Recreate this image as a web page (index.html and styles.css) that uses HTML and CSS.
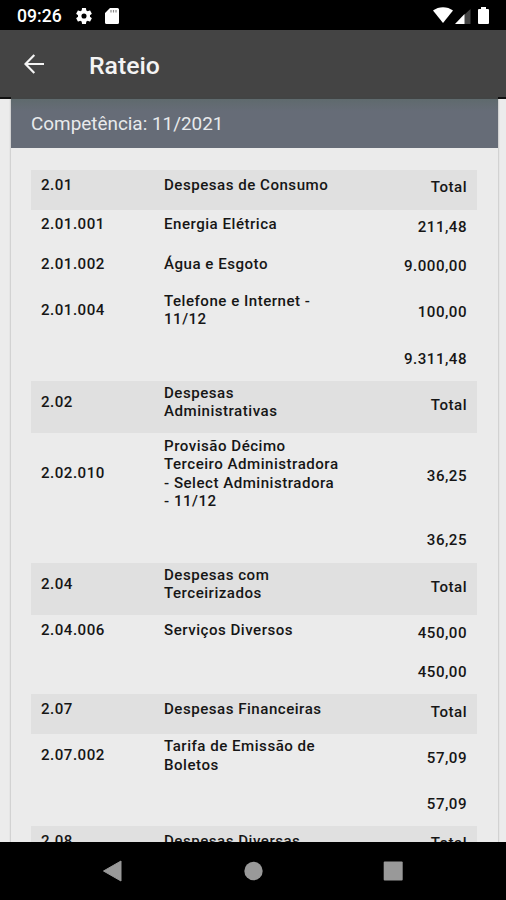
FILE: index.html
```html
<!DOCTYPE html>
<html lang="pt-BR">
<head>
<meta charset="utf-8">
<title>Rateio</title>
<link rel="stylesheet" href="styles.css">
</head>
<body>
<div class="status">
  <span class="clock">09:26</span>
  <svg class="gear" viewBox="2 2 20 20"><path fill="#fff" fill-rule="evenodd" d="M19.43 12.98c.04-.32.07-.64.07-.98s-.03-.66-.07-.98l2.11-1.65c.19-.15.24-.42.12-.64l-2-3.46c-.12-.22-.39-.3-.61-.22l-2.49 1c-.52-.4-1.08-.73-1.69-.98l-.38-2.65A.49.49 0 0 0 14 2h-4c-.25 0-.46.18-.49.42l-.38 2.65c-.61.25-1.17.59-1.69.98l-2.49-1c-.23-.09-.49 0-.61.22l-2 3.46c-.13.22-.07.49.12.64l2.11 1.65c-.04.32-.07.65-.07.98s.03.66.07.98l-2.11 1.65c-.19.15-.24.42-.12.64l2 3.46c.12.22.39.3.61.22l2.49-1c.52.4 1.08.73 1.69.98l.38 2.65c.03.24.24.42.49.42h4c.25 0 .46-.18.49-.42l.38-2.65c.61-.25 1.17-.59 1.69-.98l2.49 1c.23.09.49 0 .61-.22l2-3.46c.12-.22.07-.49-.12-.64zM12 15.2a3.2 3.2 0 1 1 0-6.4 3.2 3.2 0 0 1 0 6.4z"/></svg>
  <svg class="sd" viewBox="0 0 14 16"><path fill="#fff" d="M5 0h7.500a1.500 1.500 0 0 1 1.500 1.500v13a1.500 1.500 0 0 1-1.500 1.500h-11A1.500 1.500 0 0 1 0 14.500V5z"/><path stroke="#888" stroke-width="1.200" d="M6 2v2.500M8.500 2v2.500M11 2v2.500"/></svg>
  <span class="spacer"></span>
  <svg class="wifi" viewBox="0 0 20 16"><path fill="#fff" d="M0 3.500C5.500-1 14.500-1 20 3.500L10 16z"/></svg>
  <svg class="signal" viewBox="0 0 16 16"><path fill="#444" d="M15.500 1v15H9V7z"/><path fill="#fff" d="M9.500 6v10H0z"/></svg>
  <svg class="battery" viewBox="0 0 11 17"><path fill="#fff" d="M3 0h5v2h2q1 0 1 1v13q0 1-1 1H1q-1 0-1-1V3q0-1 1-1h2z"/></svg>
</div>
<header class="appbar">
  <svg class="back" viewBox="0 0 20 20"><path fill="none" stroke="#f4f4f4" stroke-width="2.200" d="M20 10H1.500M10.300 1L1.500 10l8.800 9"/></svg>
  <h1>Rateio</h1>
</header>
<main class="page">
  <section class="card">
    <h2>Competência: 11/2021</h2>
    <div class="table">
      <div class="row group"><span>2.01</span><span>Despesas de Consumo</span><b>Total</b></div>
      <div class="row"><span>2.01.001</span><span>Energia Elétrica</span><b>211,48</b></div>
      <div class="row"><span>2.01.002</span><span>Água e Esgoto</span><b>9.000,00</b></div>
      <div class="row"><span>2.01.004</span><span>Telefone e Internet -<br>11/12</span><b>100,00</b></div>
      <div class="row"><b>9.311,48</b></div>
      <div class="row group"><span>2.02</span><span>Despesas<br>Administrativas</span><b>Total</b></div>
      <div class="row"><span>2.02.010</span><span>Provisão Décimo<br>Terceiro Administradora<br>- Select Administradora<br>- 11/12</span><b>36,25</b></div>
      <div class="row"><b>36,25</b></div>
      <div class="row group"><span>2.04</span><span>Despesas com<br>Terceirizados</span><b>Total</b></div>
      <div class="row"><span>2.04.006</span><span>Serviços Diversos</span><b>450,00</b></div>
      <div class="row"><b>450,00</b></div>
      <div class="row group"><span>2.07</span><span>Despesas Financeiras</span><b>Total</b></div>
      <div class="row"><span>2.07.002</span><span>Tarifa de Emissão de<br>Boletos</span><b>57,09</b></div>
      <div class="row"><b>57,09</b></div>
      <div class="row group"><span>2.08</span><span>Despesas Diversas</span><b>Total</b></div>
    </div>
  </section>
</main>
<nav class="navbar">
  <svg viewBox="0 0 20 22"><path fill="#999" d="M18 1v20L.5 11z" stroke="#999" stroke-linejoin="round"/></svg>
  <svg viewBox="0 0 20 22"><circle cx="10.500" cy="11" r="9.200" fill="#999"/></svg>
  <svg viewBox="0 0 20 22"><rect x=".7" y="1.500" width="19" height="19" rx="1" fill="#999"/></svg>
</nav>
</body>
</html>
```
FILE: styles.css
```css
* { box-sizing: border-box; }
body {
  margin: 0;
  width: 506px;
  height: 900px;
  display: flex;
  flex-direction: column;
  overflow: hidden;
  background: #000;
  font-family: Roboto, "Liberation Sans", sans-serif;
}
.status {
  height: 30px;
  flex: none;
  display: flex;
  align-items: center;
  padding: 1px 17px 0 17px;
  color: #fff;
}
.clock { width: 59px; font-size: 17.6px; font-weight: 500; }
.gear { width: 16px; height: 16px; margin-right: 13px; }
.sd { width: 14px; height: 16px; }
.spacer { flex: 1; }
.wifi { width: 20px; height: 16px; margin: -2px 2px 0 0; }
.signal { width: 16px; height: 16px; margin-right: 7px; }
.battery { width: 11px; height: 17px; margin-top: -1px; }
.appbar {
  height: 67px;
  flex: none;
  display: flex;
  align-items: center;
  padding: 4px 24px 0;
  background: #444;
}
.back { width: 20px; height: 20px; margin: -3px 45px 0 0; }
h1 { margin: 0; font-size: 24.8px; font-weight: 500; color: #f4f4f4; }
.page {
  flex: 1;
  min-height: 0;
  overflow: hidden;
  padding: 0 8px 0 11px;
  background: linear-gradient(#111 2px, #ececec 2px);
}
.card {
  height: 760px;
  background: #ebebeb;
  box-shadow: 0 0 2px rgba(0, 0, 0, .35);
}
h2 {
  margin: 0;
  height: 51px;
  padding-left: 20px;
  line-height: 49px;
  font-size: 18.9px;
  font-weight: 400;
  color: #e8eaec;
  background: linear-gradient(#5f6a6d, #666c77 12px);
  border-top: 2px solid #424444;
}
.table { padding: 22px 21px 0 20px; }
.row {
  min-height: 39.5px;
  display: grid;
  grid-template-columns: 123px 1fr 90px;
  align-items: center;
  padding: 3.3px 10px 12.4px;
  font-size: 15.1px;
  font-weight: 500;
  line-height: 18.5px;
  letter-spacing: .5px;
  white-space: nowrap;
  color: #161616;
}
.row b { grid-column: 3; font-weight: 500; text-align: right; position: relative; top: 2.4px; }
.group { background: #e0e0e0; }
.navbar {
  height: 58px;
  flex: none;
  display: flex;
  justify-content: space-between;
  align-items: center;
  padding: 0 103px;
  background: #000;
}
.navbar svg { width: 20px; height: 22px; }
```
